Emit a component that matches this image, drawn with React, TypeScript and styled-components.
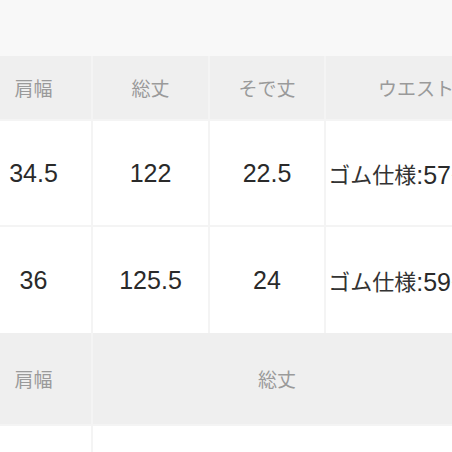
import styled, { createGlobalStyle } from 'styled-components';

const GlobalStyle = createGlobalStyle`
  body {
    margin: 0;
    background: #ffffff;
    font-family: "Liberation Sans", "Noto Sans CJK JP", sans-serif;
  }
`

const Page = styled.div`
  width: 452px;
  height: 452px;
  overflow: hidden;
  background: #ffffff;
`

const TopBar = styled.div`
  height: 56px;
  background: #f8f8f8;
`

const Table = styled.div<{ $cols: string; $rows: string }>`
  display: grid;
  grid-template-columns: ${p => p.$cols};
  grid-template-rows: ${p => p.$rows};
  gap: 2px;
  margin-left: -24px;
  width: max-content;
  background: #f4f4f4;
`

const HeadCell = styled.div`
  display: flex;
  align-items: center;
  justify-content: center;
  background: #efefef;
  color: #9a9a9a;
  font-size: 19px;
  white-space: nowrap;
`

const Cell = styled.div`
  display: flex;
  align-items: center;
  justify-content: center;
  background: #ffffff;
  color: #2a2a2a;
  font-size: 25px;
  white-space: nowrap;
`

const Kana = styled.span`
  font-size: 22px;
  color: #333333;
`

const headers = ['肩幅', '総丈', 'そで丈', 'ウエスト']

const rows = [
  ['34.5', '122', '22.5', ['ゴム仕様', ':57〜90']],
  ['36', '125.5', '24', ['ゴム仕様', ':59〜92']],
]

export default function App() {
  return (
    <Page>
      <GlobalStyle />
      <TopBar />
      <Table $cols="115px 115px 114px 180px" $rows="63px 104px 106px">
        {headers.map(h => (
          <HeadCell key={h}>{h}</HeadCell>
        ))}
        {rows.map((r, i) =>
          r.map((v, j) => (
            <Cell key={`${i}-${j}`}>
              {Array.isArray(v) ? (
                <>
                  <Kana>{v[0]}</Kana>
                  {v[1]}
                </>
              ) : (
                v
              )}
            </Cell>
          ))
        )}
      </Table>
      <Table $cols="115px 368px" $rows="91px 80px">
        <HeadCell>肩幅</HeadCell>
        <HeadCell>総丈</HeadCell>
        <Cell />
        <Cell />
      </Table>
    </Page>
  )
}
